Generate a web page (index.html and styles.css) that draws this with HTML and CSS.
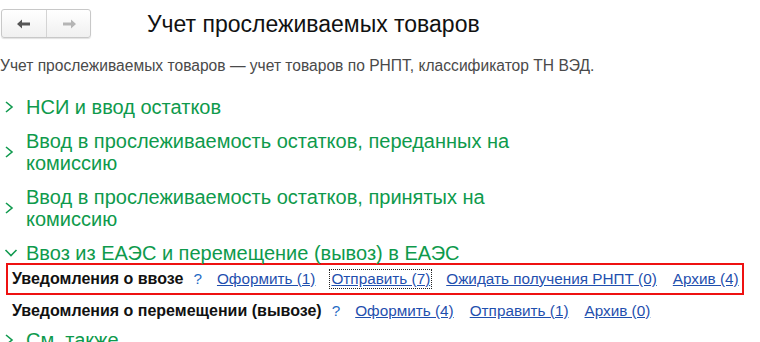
FILE: index.html
```html
<!DOCTYPE html>
<html lang="ru">
<head>
    <meta charset="UTF-8">
    <title>Учет прослеживаемых товаров</title>
    <link rel="stylesheet" href="styles.css">
</head>
<body>
    <div class="page">
        <!-- Header -->
        <div class="header">
            <div class="nav-buttons">
                <div class="nav-btn">
                    <svg viewBox="0 0 16 12">
                        <path d="M1 6L6 1.5V4.5H14V7.5H6V10.5Z" fill="#555"/>
                    </svg>
                </div>
                <div class="nav-btn">
                    <svg viewBox="0 0 16 12">
                        <path d="M15 6L10 1.5V4.5H2V7.5H10V10.5Z" fill="#b5b5b5"/>
                    </svg>
                </div>
            </div>
            <h1 class="title">Учет прослеживаемых товаров</h1>
        </div>

        <p class="description">Учет прослеживаемых товаров — учет товаров по РНПТ, классификатор ТН ВЭД.</p>

        <!-- Groups -->
        <div class="groups">
            <div class="group">
                <svg class="chevron" viewBox="0 0 10 14"><path d="M2 2L8 7L2 12"/></svg>
                <span class="group-title">НСИ и ввод остатков</span>
            </div>
            <div class="group">
                <svg class="chevron" viewBox="0 0 10 14"><path d="M2 2L8 7L2 12"/></svg>
                <span class="group-title">Ввод в прослеживаемость остатков, переданных на комиссию</span>
            </div>
            <div class="group">
                <svg class="chevron" viewBox="0 0 10 14"><path d="M2 2L8 7L2 12"/></svg>
                <span class="group-title">Ввод в прослеживаемость остатков, принятых на комиссию</span>
            </div>
            <div class="group open">
                <svg class="chevron down" viewBox="0 0 14 10"><path d="M1.5 2L7 7.5L12.5 2"/></svg>
                <span class="group-title">Ввоз из ЕАЭС и перемещение (вывоз) в ЕАЭС</span>
            </div>
        </div>

        <div class="notice-row highlighted">
            <span class="notice-name">Уведомления о ввозе</span>
            <a href="#" class="help">?</a>
            <a href="#" class="cmd">Оформить (1)</a>
            <a href="#" class="cmd focused">Отправить (7)</a>
            <a href="#" class="cmd">Ожидать получения РНПТ (0)</a>
            <a href="#" class="cmd">Архив (4)</a>
        </div>
        <div class="notice-row">
            <span class="notice-name">Уведомления о перемещении (вывозе)</span>
            <a href="#" class="help">?</a>
            <a href="#" class="cmd">Оформить (4)</a>
            <a href="#" class="cmd">Отправить (1)</a>
            <a href="#" class="cmd">Архив (0)</a>
        </div>

        <div class="group see-also">
            <svg class="chevron" viewBox="0 0 10 14"><path d="M2 2L8 7L2 12"/></svg>
            <span class="group-title">См. также</span>
        </div>
    </div>
</body>
</html>
```

FILE: styles.css
```css
* {
    margin: 0;
    padding: 0;
    box-sizing: border-box;
}

body {
    font-family: Arial, "Liberation Sans", sans-serif;
    background: #fff;
    color: #333;
    overflow: hidden;
}

.page {
    width: 760px;
    height: 342px;
    overflow: hidden;
}

/* Header */
.header {
    display: flex;
    align-items: center;
    padding: 9px 0 0 1px;
}

.nav-buttons {
    display: flex;
    height: 29px;
    border: 1px solid #c8c8c8;
    border-radius: 3px;
    background: linear-gradient(180deg, #ffffff, #f0f0f0);
    box-shadow: 0 1px 1px rgba(0,0,0,0.12);
}

.nav-btn {
    width: 44px;
    display: flex;
    align-items: center;
    justify-content: center;
}

.nav-btn + .nav-btn {
    border-left: 1px solid #d4d4d4;
}

.nav-btn svg {
    width: 16px;
    height: 12px;
}

.title {
    margin-left: 56px;
    font-size: 23px;
    font-weight: normal;
    line-height: 26px;
    color: #111;
}

.description {
    margin-top: 19px;
    font-size: 15.6px;
    line-height: 18px;
    color: #4a4a4a;
}

/* Groups */
.groups {
    margin-top: 21px;
    display: flex;
    flex-direction: column;
    gap: 12px;
}

.group {
    display: flex;
    align-items: center;
    padding-left: 4px;
}

.chevron {
    width: 10px;
    height: 14px;
    flex-shrink: 0;
    fill: none;
    stroke: #119a4f;
    stroke-width: 1.6;
}

.chevron.down {
    width: 14px;
    height: 10px;
}

.group-title {
    margin-left: 12px;
    max-width: 490px;
    font-size: 20px;
    line-height: 22px;
    color: #0e9a4c;
}

.group.open .group-title {
    margin-left: 8px;
}

.see-also {
    margin-top: 2px;
}

/* Notifications */
.notice-row {
    display: flex;
    align-items: center;
    margin-left: 6px;
    height: 32px;
    padding-left: 6px;
    font-size: 15.3px;
    white-space: nowrap;
}

.notice-row > * {
    flex-shrink: 0;
}

.notice-row.highlighted {
    width: 738px;
    border: 2px solid #ee1111;
    padding-left: 4px;
    margin-top: -1px;
}

.notice-name {
    font-size: 16px;
    font-weight: bold;
    color: #111;
}

.help {
    margin-left: 10px;
    color: #1f6bc4;
    text-decoration: none;
}

.cmd {
    margin-left: 14px;
    color: #1f4fae;
    text-decoration: underline;
    padding: 0 1px;
}

.cmd.focused {
    outline: 1px dotted #222;
}
```
